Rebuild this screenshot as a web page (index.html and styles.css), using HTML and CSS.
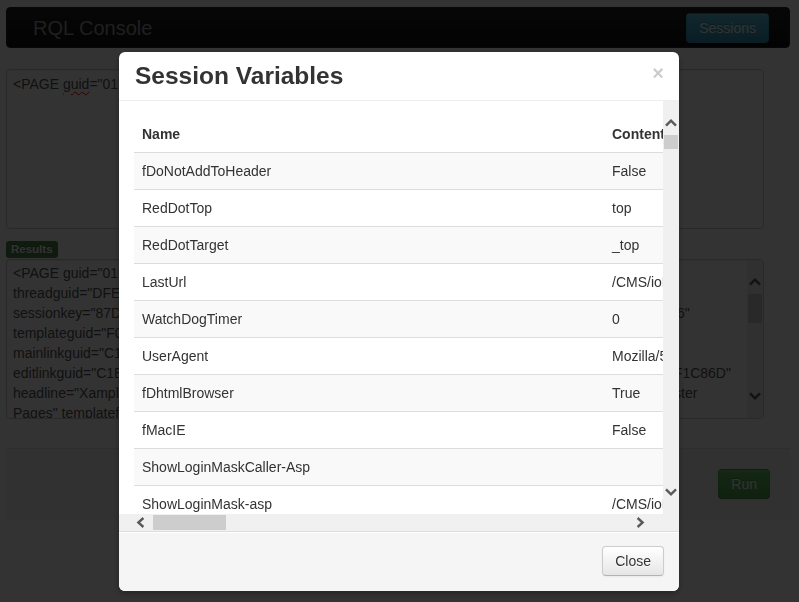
FILE: index.html
```html
<!DOCTYPE html>
<html lang="en">
<head>
<meta charset="utf-8">
<title>RQL Console</title>
<link rel="stylesheet" href="styles.css">
</head>
<body>
<div class="page">
  <div class="navbar">
    <span class="brand">RQL Console</span>
    <button class="btn btn-info">Sessions</button>
  </div>

  <div class="editor">&lt;PAGE <span class="spell">guid</span>="01B3E5F7A9C24D6E8F0A1B3C5D7E9F2A" action="load" /&gt;</div>

  <span class="label">Results</span>
  <div class="results">
    <div class="results-text">
      <div class="ln">&lt;PAGE guid="01B3E5F7A9C24D6E8F0A1B3C5D7E9F2A"</div>
      <div class="ln">threadguid="DFE2A4C6E8B04D1F9A3C5E7B9D1F3A5C"</div>
      <div class="ln">sessionkey="87D4A6C8E0F24B3D5F7A9C1E3B5D7F90" userguid="1234567890123456789012345678906"</div>
      <div class="ln">templateguid="F0A2C4E6B8D04F1A3C5E7B9D2F4A6C8E"</div>
      <div class="ln">mainlinkguid="C1D3F5A7B9E24C6D8E0F2A4B6C8D0E2F"</div>
      <div class="ln">editlinkguid="C1E3A5C7E9B04D2F4A6C8E0B2D4F6A8C" linkguid="D4C2B7DCAE91B3CAD5E38DA10BF1C86D"</div>
      <div class="ln">headline="Xample Homepage" pagetitle="Xample Startpage" templatetitle="Xample Site Content Class Master</div>
      <div class="ln">Pages" templatefolderguid="7B2D4F6A8C0E1A3C5E7B9D2F4A6C8E0B"</div>
    </div>
    <div class="vscroll">
      <div class="sb-btn up"><svg width="12" height="9" viewBox="0 0 12 9"><path d="M1 7.6 L6 2.6 L11 7.6" fill="none" stroke="#5a5a5a" stroke-width="2.4"/></svg></div>
      <div class="thumb-v tall"></div>
      <div class="sb-fill"></div>
      <div class="sb-btn down"><svg width="12" height="9" viewBox="0 0 12 9"><path d="M1 1.4 L6 6.4 L11 1.4" fill="none" stroke="#5a5a5a" stroke-width="2.4"/></svg></div>
    </div>
  </div>

  <div class="form-actions">
    <button class="btn btn-success">Run</button>
  </div>
</div>

<div class="backdrop"></div>

<div class="modal">
  <div class="modal-header">
    <h3>Session Variables</h3>
    <span class="close">&times;</span>
  </div>
  <div class="modal-body">
    <div class="viewport">
      <table class="table">
        <colgroup><col class="col-name"><col class="col-content"></colgroup>
        <thead>
          <tr><th>Name</th><th>Content</th></tr>
        </thead>
        <tbody>
          <tr><td>fDoNotAddToHeader</td><td>False</td></tr>
          <tr><td>RedDotTop</td><td>top</td></tr>
          <tr><td>RedDotTarget</td><td>_top</td></tr>
          <tr><td>LastUrl</td><td>/CMS/ioRD.asp?Action=RedDot&amp;Mode=1</td></tr>
          <tr><td>WatchDogTimer</td><td>0</td></tr>
          <tr><td>UserAgent</td><td>Mozilla/5.0 (compatible; MSIE 10.0; Windows NT 6.1; Trident/6.0)</td></tr>
          <tr><td>fDhtmlBrowser</td><td>True</td></tr>
          <tr><td>fMacIE</td><td>False</td></tr>
          <tr><td>ShowLoginMaskCaller-Asp</td><td></td></tr>
          <tr><td>ShowLoginMask-asp</td><td>/CMS/ioRDLogin.asp</td></tr>
          <tr><td>LanguageVariantId</td><td>ENG</td></tr>
          <tr><td>ServerName</td><td>localhost</td></tr>
        </tbody>
      </table>
    </div>
    <div class="vscroll">
      <div class="sb-btn up"><svg width="12" height="9" viewBox="0 0 12 9"><path d="M1 7.6 L6 2.6 L11 7.6" fill="none" stroke="#5a5a5a" stroke-width="2.4"/></svg></div>
      <div class="thumb-v"></div>
      <div class="sb-fill"></div>
      <div class="sb-btn down"><svg width="12" height="9" viewBox="0 0 12 9"><path d="M1 1.4 L6 6.4 L11 1.4" fill="none" stroke="#5a5a5a" stroke-width="2.4"/></svg></div>
    </div>
    <div class="hscroll">
      <div class="sb-btn left"><svg width="9" height="11" viewBox="0 0 9 11"><path d="M7.4 1 L2.4 5.5 L7.4 10" fill="none" stroke="#5a5a5a" stroke-width="2.4"/></svg></div>
      <div class="thumb-h"></div>
      <div class="sb-fill"></div>
      <div class="sb-btn right"><svg width="9" height="11" viewBox="0 0 9 11"><path d="M1.6 1 L6.6 5.5 L1.6 10" fill="none" stroke="#5a5a5a" stroke-width="2.4"/></svg></div>
    </div>
    <div class="sb-corner"></div>
  </div>
  <div class="modal-footer">
    <button class="btn">Close</button>
  </div>
</div>
</body>
</html>
```

FILE: styles.css
```css
html, body {
  margin: 0;
  padding: 0;
}

body {
  font-family: "Liberation Sans", Arial, sans-serif;
  font-size: 14px;
  line-height: 20px;
  color: #333;
  background: #fff;
  width: 799px;
  height: 602px;
  overflow: hidden;
}

.page {
  padding: 7px 9px 0 6px;
}

/* Navbar */
.navbar {
  display: flex;
  align-items: center;
  justify-content: space-between;
  box-sizing: border-box;
  height: 41px;
  padding: 0 20px 0 26px;
  background: linear-gradient(#222, #111);
  border: 1px solid #252525;
  border-radius: 4px;
}

.brand {
  font-size: 20px;
  line-height: 20px;
  color: #999;
}

/* Buttons */
.btn {
  display: inline-block;
  box-sizing: border-box;
  height: 30px;
  padding: 4px 12px;
  font-family: inherit;
  font-size: 14px;
  line-height: 20px;
  color: #333;
  background: linear-gradient(#fff, #e6e6e6);
  border: 1px solid #ccc;
  border-bottom-color: #b3b3b3;
  border-radius: 4px;
  box-shadow: inset 0 1px 0 rgba(255, 255, 255, .2), 0 1px 2px rgba(0, 0, 0, .05);
  text-shadow: 0 1px 1px rgba(255, 255, 255, .75);
  cursor: pointer;
}

.btn-info {
  color: #fff;
  background: linear-gradient(#5bc0de, #2f96b4);
  border-color: rgba(0, 0, 0, .1) rgba(0, 0, 0, .1) rgba(0, 0, 0, .25);
  text-shadow: 0 -1px 0 rgba(0, 0, 0, .25);
}

.btn-success {
  color: #fff;
  background: linear-gradient(#62c462, #51a351);
  border-color: rgba(0, 0, 0, .1) rgba(0, 0, 0, .1) rgba(0, 0, 0, .25);
  text-shadow: 0 -1px 0 rgba(0, 0, 0, .25);
}

/* Editor */
.editor {
  box-sizing: border-box;
  width: 758px;
  height: 160px;
  margin-top: 21px;
  padding: 4px 6px;
  color: #555;
  background: #fff;
  border: 1px solid #ccc;
  border-radius: 4px;
  box-shadow: inset 0 1px 1px rgba(0, 0, 0, .075);
  white-space: nowrap;
  overflow: hidden;
}

.spell {
  text-decoration: underline wavy #e00;
  text-decoration-thickness: 1px;
  text-underline-offset: 2px;
}

/* Label */
.label {
  display: block;
  width: max-content;
  margin-top: 12px;
  padding: 2px 5px;
  font-size: 11.5px;
  font-weight: bold;
  line-height: 13px;
  color: #fff;
  background: #468847;
  border-radius: 3px;
  text-shadow: 0 -1px 0 rgba(0, 0, 0, .25);
}

/* Results */
.results {
  box-sizing: border-box;
  width: 758px;
  height: 160px;
  margin-top: 1px;
  display: grid;
  grid-template-columns: 1fr 16px;
  background: #fff;
  border: 1px solid #ccc;
  border-radius: 4px;
  box-shadow: inset 0 1px 1px rgba(0, 0, 0, .075);
  overflow: hidden;
}

.results-text {
  padding: 3px 6px 0;
  color: #555;
  overflow: hidden;
  min-width: 0;
}

.ln {
  white-space: pre;
}

/* Scrollbars */
.vscroll {
  display: flex;
  flex-direction: column;
  background: #f0f0f0;
}

.hscroll {
  display: flex;
  background: #f0f0f0;
}

.sb-btn {
  display: flex;
  box-sizing: border-box;
  flex: none;
}

.vscroll .sb-btn {
  height: 34px;
  justify-content: center;
}

.vscroll .up {
  align-items: flex-start;
  padding-top: 17px;
}

.vscroll .down {
  align-items: flex-end;
  padding-bottom: 17px;
}

.hscroll .sb-btn {
  width: 34px;
  align-items: center;
}

.hscroll .left {
  justify-content: flex-start;
  padding-left: 17px;
}

.hscroll .right {
  justify-content: flex-end;
  padding-right: 18px;
}

.sb-btn svg {
  display: block;
}

.sb-fill {
  flex: 1;
}

.thumb-v {
  height: 14px;
  margin: 0 1px;
  background: #cdcdcd;
}

.thumb-v.tall {
  height: 29px;
}

.thumb-h {
  width: 73px;
  margin: 1px 0;
  background: #cdcdcd;
}

.sb-corner {
  background: #f0f0f0;
}

/* Form actions */
.form-actions {
  display: flex;
  justify-content: flex-end;
  margin-top: 29px;
  padding: 20px 20px 21px;
  background: #f5f5f5;
  border-top: 1px solid #e5e5e5;
}

/* Backdrop */
.backdrop {
  position: fixed;
  inset: 0;
  background: rgba(0, 0, 0, .8);
}

/* Modal */
.modal {
  position: fixed;
  top: 52px;
  left: 119px;
  width: 560px;
  background: #fff;
  border-radius: 6px;
  box-shadow: 0 3px 7px rgba(0, 0, 0, .3);
  overflow: hidden;
}

.modal-header {
  display: flex;
  justify-content: space-between;
  align-items: flex-start;
  padding: 9px 15px 9px 16px;
  border-bottom: 1px solid #eee;
}

.modal-header h3 {
  margin: 0;
  font-size: 24.5px;
  line-height: 30px;
  font-weight: bold;
  color: #333;
}

.close {
  margin-top: 2px;
  font-size: 20px;
  font-weight: bold;
  line-height: 20px;
  color: #000;
  opacity: .2;
  text-shadow: 0 1px 0 #fff;
}

.modal-body {
  display: grid;
  grid-template-columns: 1fr 16px;
  grid-template-rows: 413px 17px;
}

.viewport {
  overflow: hidden;
  padding: 15px 0 0 15px;
  min-width: 0;
}

.table {
  width: 900px;
  table-layout: fixed;
  border-collapse: collapse;
  border-spacing: 0;
}

.table .col-name {
  width: 470px;
}

.table .col-content {
  width: 430px;
}

.table th,
.table td {
  padding: 8px;
  line-height: 20px;
  text-align: left;
  vertical-align: top;
  border-top: 1px solid #ddd;
  white-space: nowrap;
  overflow: hidden;
}

.table thead th {
  border-top: 0;
  vertical-align: bottom;
  font-weight: bold;
}

.table tbody tr:nth-child(odd) td {
  background: #f9f9f9;
}

.modal-footer {
  display: flex;
  justify-content: flex-end;
  padding: 14px 15px 15px;
  background: #f5f5f5;
  border-top: 1px solid #ddd;
  box-shadow: inset 0 1px 0 #fff;
}
```
